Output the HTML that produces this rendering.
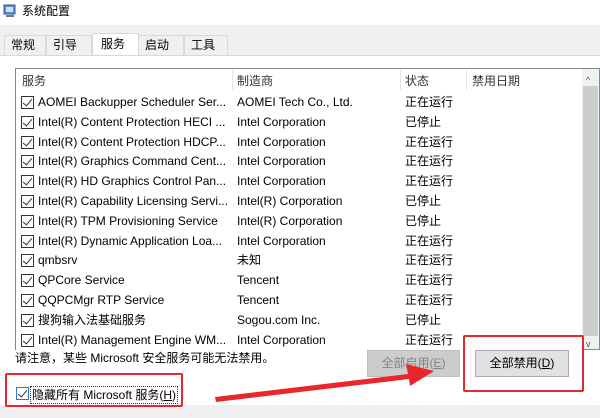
<!DOCTYPE html><html><head><meta charset="utf-8"><style>
*{margin:0;padding:0;box-sizing:border-box}
body{width:600px;height:418px;overflow:hidden;background:#fff;font-family:"Liberation Sans","Noto Sans CJK SC",sans-serif;font-size:12px;color:#000;position:relative}
.a{position:absolute;white-space:nowrap;line-height:16px}
.cb{position:absolute;width:13px;height:13px;border:1px solid #333;background:#fff}
.cb:after{content:"";position:absolute;left:3px;top:0px;width:4px;height:8px;border:solid #333;border-width:0 1.5px 1.5px 0;transform:rotate(40deg)}
.tab{position:absolute;top:35px;height:21px;background:#f0f0f0;border:1px solid #d9d9d9;border-bottom:none;padding:1px 0 0 6px;font-size:12px;line-height:16px}
</style></head><body>
<div class="a" style="left:0;top:0;width:600px;height:25px;background:#fff"></div>
<svg class="a" style="left:3px;top:4px" width="14" height="14"><rect x="1" y="1" width="11" height="9" fill="#5b8fd1" stroke="#2b5a9c"/><rect x="3" y="3" width="7" height="5" fill="#cfe3f7"/><rect x="3" y="11" width="8" height="2" fill="#777"/></svg>
<div class="a" style="left:22px;top:3px;font-size:12px">系统配置</div>
<div class="a" style="left:0;top:25px;width:600px;height:30px;background:#f0f0f0"></div>
<div class="tab" style="left:4px;width:42px">常规</div>
<div class="tab" style="left:46px;width:46px">引导</div>
<div class="tab" style="left:138px;width:46px">启动</div>
<div class="tab" style="left:184px;width:44px">工具</div>
<div class="tab" style="left:92px;width:47px;top:33px;height:23px;background:#fff;padding:2px 0 0 8px">服务</div>
<div class="a" style="left:0;top:55px;width:600px;height:1px;background:#d9d9d9"></div>
<div class="a" style="left:15px;top:68px;width:585px;height:282px;border:1px solid #828790;background:#fff"></div>
<div class="a" style="left:232px;top:70px;width:1px;height:20px;background:#e5e5e5"></div>
<div class="a" style="left:400px;top:70px;width:1px;height:20px;background:#e5e5e5"></div>
<div class="a" style="left:466px;top:70px;width:1px;height:20px;background:#e5e5e5"></div>
<div class="a" style="left:22px;top:73px;color:#333">服务</div>
<div class="a" style="left:237px;top:73px;color:#333">制造商</div>
<div class="a" style="left:405px;top:73px;color:#333">状态</div>
<div class="a" style="left:472px;top:73px;color:#333">禁用日期</div>
<div class="a" style="left:582px;top:69px;width:17px;height:280px;background:#f0f0f0"></div>
<div class="a" style="left:583px;top:86px;width:15px;height:250px;background:#cdcdcd"></div>
<div class="a" style="left:586px;top:72px;font-size:9px;color:#555">^</div>
<div class="a" style="left:586px;top:336px;font-size:9px;color:#555">v</div>
<div id="rows"></div>
<div class="a" style="left:15px;top:350px">请注意，某些 Microsoft 安全服务可能无法禁用。</div>
<div class="a" style="left:367px;top:350px;width:93px;height:27px;background:#cccccc;border:1px solid #bfbfbf;color:#838383;text-align:center;line-height:25px">全部启用(<u>E</u>)</div>
<div class="a" style="left:475px;top:350px;width:94px;height:27px;background:#e1e1e1;border:1px solid #adadad;text-align:center;line-height:25px">全部禁用(<u>D</u>)</div>
<div class="a" style="left:463px;top:335px;width:121px;height:57px;border:2px solid #e8262b;border-radius:2px"></div>
<div class="a" style="left:0;top:405px;width:600px;height:13px;background:#f0f0f0"></div>
<div class="cb" style="left:16px;top:387px;border-color:#3377cc"></div>
<div class="a" style="left:30px;top:386px;border:1px dotted #333;padding:0 1px;font-size:12px">隐藏所有 Microsoft 服务(<u>H</u>)</div>
<div class="a" style="left:5px;top:373px;width:178px;height:34px;border:2px solid #e8262b;border-radius:2px"></div>
<svg class="a" style="left:0;top:0" width="600" height="418"><polygon points="215,397 408,374 406,364 434,371 410,386 409,379 216,402" fill="#e8262b"/></svg>
<script>
var d=[["AOMEI Backupper Scheduler Ser...","AOMEI Tech Co., Ltd.","正在运行"],["Intel(R) Content Protection HECI ...","Intel Corporation","已停止"],["Intel(R) Content Protection HDCP...","Intel Corporation","正在运行"],["Intel(R) Graphics Command Cent...","Intel Corporation","正在运行"],["Intel(R) HD Graphics Control Pan...","Intel Corporation","正在运行"],["Intel(R) Capability Licensing Servi...","Intel(R) Corporation","已停止"],["Intel(R) TPM Provisioning Service","Intel(R) Corporation","已停止"],["Intel(R) Dynamic Application Loa...","Intel Corporation","正在运行"],["qmbsrv","未知","正在运行"],["QPCore Service","Tencent","正在运行"],["QQPCMgr RTP Service","Tencent","正在运行"],["搜狗输入法基础服务","Sogou.com Inc.","已停止"],["Intel(R) Management Engine WM...","Intel Corporation","正在运行"]];
var h="";d.forEach(function(r,i){var y=94+i*19.8;h+='<div class="cb" style="left:21px;top:'+(y+2)+'px"></div><div class="a" style="left:38px;top:'+y+'px">'+r[0]+'</div><div class="a" style="left:237px;top:'+y+'px">'+r[1]+'</div><div class="a" style="left:405px;top:'+y+'px">'+r[2]+'</div>';});
h+='<div class="a" style="left:16px;top:348px;width:566px;height:2px;background:#fff"></div>';
document.getElementById("rows").innerHTML=h;
</script>
</body></html>
